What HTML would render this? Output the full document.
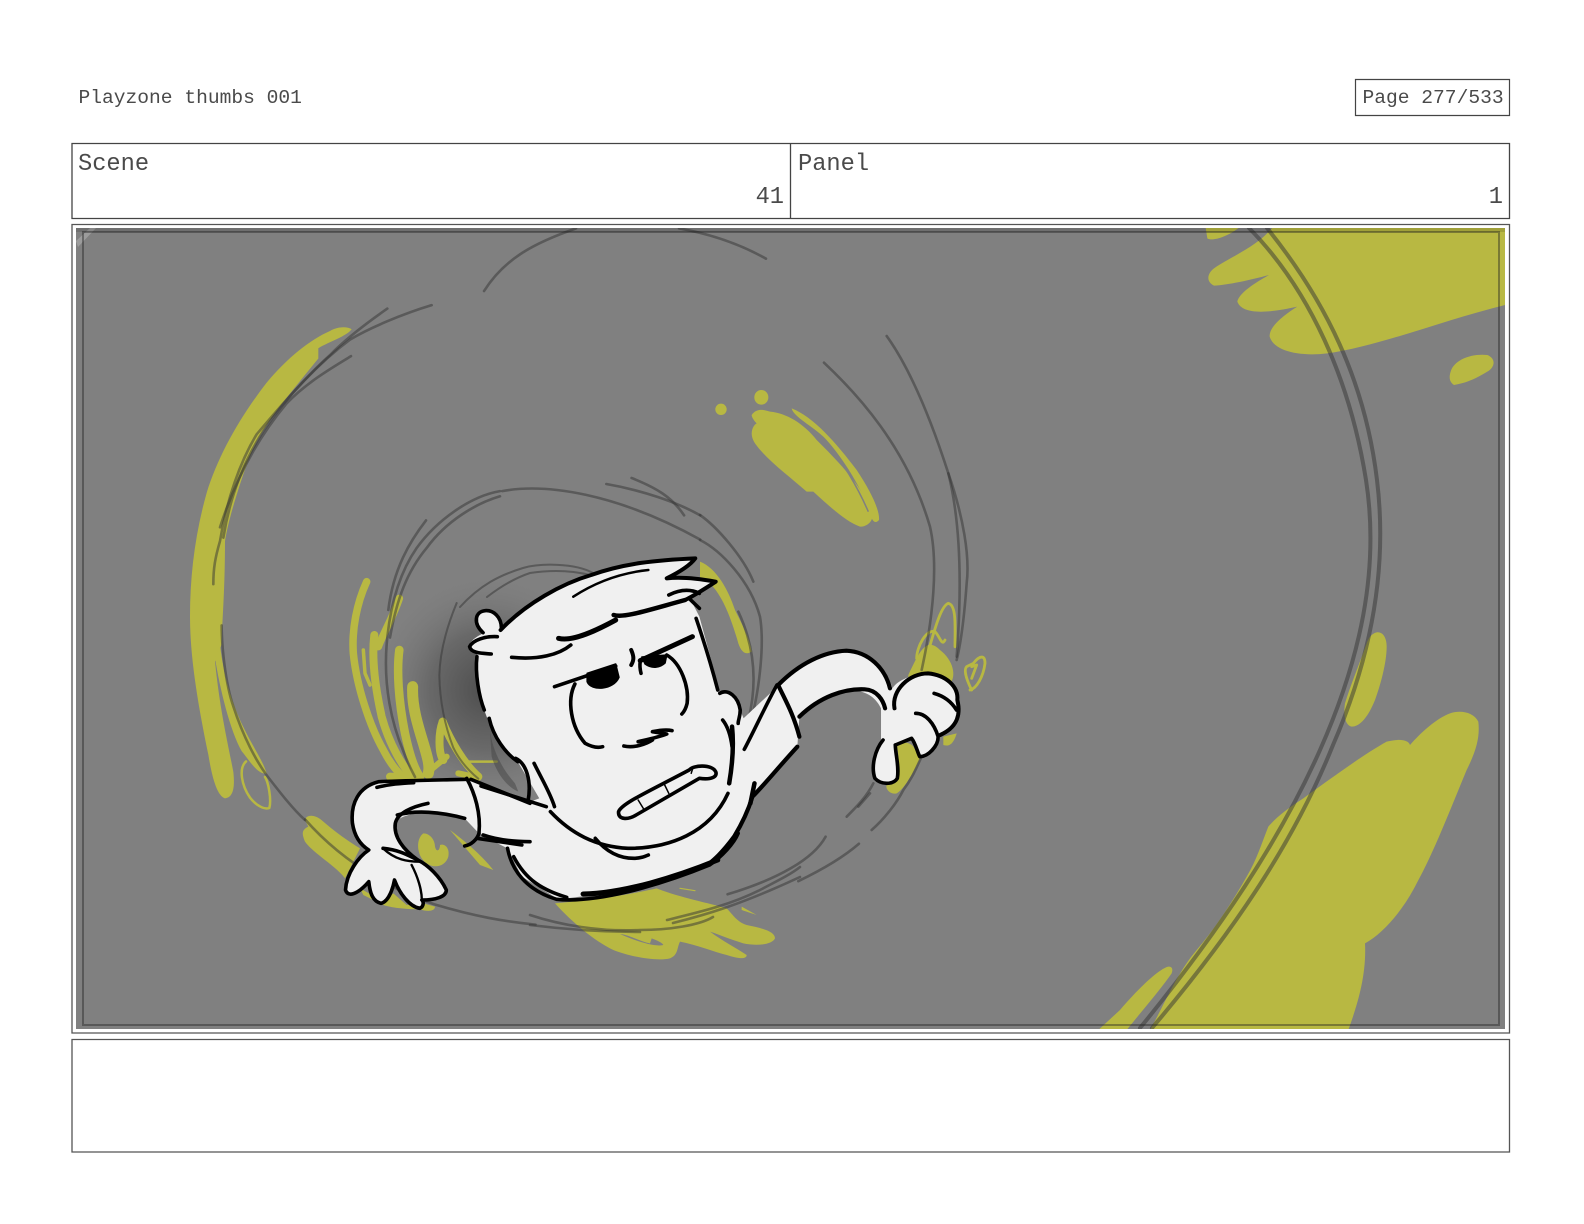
<!DOCTYPE html>
<html><head><meta charset="utf-8"><title>Playzone thumbs 001</title>
<style>
html,body{margin:0;padding:0;background:#fff}
svg{display:block}
path,ellipse,rect,circle{vector-effect:non-scaling-stroke}
.y{fill:#b8b842;stroke:none}
.ys{fill:none;stroke:#b8b842;stroke-linecap:round;stroke-linejoin:round}
.g{fill:none;stroke:#333;stroke-opacity:.5;stroke-width:2.6;stroke-linecap:round;stroke-linejoin:round}
.f{fill:#f0f0f0;stroke:none}
.k{fill:none;stroke:#000;stroke-width:3.6;stroke-linecap:round;stroke-linejoin:round}
.kf{fill:#000;stroke:#000;stroke-width:1.5;stroke-linejoin:round}
text{font-family:"Liberation Mono",monospace;fill:#4a4a4a}
</style></head><body>
<svg width="1584" height="1224" viewBox="0 0 1584 1224" xmlns="http://www.w3.org/2000/svg">
<rect width="1584" height="1224" fill="#fff"/>
<defs>
<radialGradient id="sh" gradientUnits="userSpaceOnUse" cx="488" cy="690" r="118">
<stop offset="0" stop-color="#2a2a2a" stop-opacity=".6"/><stop offset=".5" stop-color="#333" stop-opacity=".3"/><stop offset="1" stop-color="#808080" stop-opacity="0"/>
</radialGradient>
<clipPath id="im"><rect x="76" y="228" width="1429" height="801"/></clipPath>
</defs>

<text x="78.500" y="103" font-size="19.6">Playzone thumbs 001</text>
<rect x="1355.500" y="79.500" width="154" height="36" fill="#fff" stroke="#444" stroke-width="1.200"/>
<text x="1362.500" y="103" font-size="19.6">Page 277/533</text>

<rect x="72" y="143.500" width="1437.500" height="75" fill="#fff" stroke="#444" stroke-width="1.300"/>
<path d="M790.500,143.500V218.500" stroke="#444" stroke-width="1.300" fill="none"/>
<text x="78" y="170" font-size="23.7">Scene</text>
<text x="798" y="170" font-size="23.7">Panel</text>
<text x="784" y="203" font-size="23.7" text-anchor="end">41</text>
<text x="1503" y="203" font-size="23.7" text-anchor="end">1</text>

<rect x="72" y="224.500" width="1437.500" height="808.500" fill="#fff" stroke="#555" stroke-width="1.300"/>
<rect x="72" y="1039.500" width="1437.500" height="112.500" fill="#fff" stroke="#555" stroke-width="1.300"/>

<g clip-path="url(#im)">
<rect x="76" y="228" width="1429" height="801" fill="#808080"/>
<path d="M78,247L96,228H90L76,241Z" fill="#9c9c9c"/>
<circle cx="488" cy="690" r="118" fill="url(#sh)"/>

<!-- top right yellow -->
<g transform="translate(1184,60) scale(.33333)">
<path class="y" d="M65,503L70,535C85,545 130,530 165,503Z"/>
<path class="y" d="M265,503C220,560 140,590 90,625C70,640 65,665 90,677C130,675 200,660 255,645C210,670 165,700 160,725C175,765 250,760 340,740C300,765 255,800 257,830C270,875 350,890 430,880C580,860 780,780 963,735V503Z"/>
<path class="y" d="M800,935C810,900 860,880 910,885C935,895 935,920 910,935C870,960 840,970 810,975C795,965 795,950 800,935Z"/>
</g>
<!-- bottom right yellow -->
<g transform="translate(1120,600) scale(.33333)">
<path class="y" d="M770,97C790,95 800,115 800,140C800,190 780,260 765,300C745,350 720,380 695,380C675,375 670,345 675,310C690,260 715,200 740,130C745,115 755,100 770,97Z"/>
<path class="y" d="M685,1290C710,1220 740,1130 735,1030C790,1000 850,930 890,850C940,760 990,630 1040,510C1070,450 1080,410 1075,365C1060,335 1020,330 990,340C950,355 905,395 870,435C865,420 840,415 800,425C720,470 620,545 550,595C510,620 470,650 445,680C425,730 410,780 380,830C340,900 290,980 230,1050C170,1120 130,1220 90,1290Z"/>
<path class="y" d="M145,1100C120,1105 60,1160 0,1230L-65,1290H20C60,1240 120,1170 155,1120C160,1105 155,1100 145,1100Z"/>
</g>
<!-- left yellow -->
<g transform="translate(170,300) scale(.33333,.34439)">
<path class="y" d="M545,85C530,75 500,78 480,90C420,115 350,170 290,240C210,340 145,450 110,560C75,680 60,800 60,920C60,1040 85,1180 115,1320C125,1380 140,1440 165,1447C190,1445 195,1415 190,1370C170,1270 150,1190 135,1050L155,1000C155,950 165,850 165,700C175,640 200,560 240,450C280,360 370,260 445,170L445,140C480,120 530,105 545,85Z"/>
<path class="y" d="M135,1040C150,1130 180,1250 215,1310C240,1340 265,1380 290,1375C280,1340 250,1300 220,1240C185,1170 160,1090 150,1000Z"/>
<path class="ys" stroke-width="2.500" d="M228,1340C205,1360 215,1410 240,1445C260,1470 285,1480 298,1475C305,1450 295,1400 285,1385"/>
</g>
<!-- strands left of head -->
<g transform="translate(340,560) scale(.33333)">
<path class="ys" stroke-width="7.500" d="M80,65C50,130 35,210 40,280C50,380 90,500 130,570C150,610 175,640 195,655"/>
<path class="ys" stroke-width="7.500" d="M178,115C160,170 125,230 115,260"/>
<path class="ys" stroke-width="8" d="M103,225C95,290 105,380 125,470C150,560 190,620 215,650"/>
<path class="ys" stroke-width="8.500" d="M178,270C170,330 175,420 195,520C210,590 225,630 240,650"/>
<path class="ys" stroke-width="11" d="M218,380C215,440 235,500 250,550C265,600 270,620 265,640"/>
<path class="ys" stroke-width="8" d="M308,485C330,540 370,610 415,650"/>
<path class="ys" stroke-width="8" d="M308,485C295,520 295,580 310,600"/>
<path class="ys" stroke-width="6" d="M260,640L320,590"/>
<path class="ys" stroke-width="2.500" d="M385,605L470,605"/>
<path class="ys" stroke-width="3.500" d="M70,270L75,340L90,375"/>
<path class="ys" stroke-width="6" d="M355,640L410,652"/>
<path class="ys" stroke-width="8" d="M150,650L240,655"/>
<path d="M450,510C455,560 480,620 525,670L535,695C500,680 470,640 455,590Z" fill="#444" opacity=".5"/>
</g>
<!-- mid yellow -->
<g transform="translate(700,330) scale(.33333)">
<circle class="y" cx="63" cy="238" r="17"/>
<ellipse class="y" cx="184" cy="202" rx="21" ry="22"/>
<path class="y" d="M155,255C170,232 195,240 210,245C260,250 310,280 350,330C410,390 470,450 510,530C530,560 510,590 480,590C440,575 400,540 340,485L320,485C270,440 200,390 165,340C145,310 160,285 170,280C160,270 155,260 155,255Z"/>
<path class="y" d="M275,235C340,260 410,340 470,420C510,480 540,540 537,570C525,585 515,570 510,550C490,480 420,370 370,320C340,290 280,260 275,235Z"/>
<path d="M385,345C430,400 470,465 505,545" fill="none" stroke="#808080" stroke-width="1.500"/>
<path class="y" d="M0,695C50,715 85,780 105,840C130,890 150,930 155,965C140,975 125,970 115,940C95,870 70,800 30,760L0,745Z"/>
<path class="y" d="M625,1035C660,960 680,920 720,960C760,990 770,1040 750,1060L625,1050Z"/>
<path class="ys" stroke-width="2.800" d="M670,1010C690,960 715,830 745,820C770,825 765,890 765,950"/>
<path class="ys" stroke-width="2.800" d="M650,985C650,950 680,895 705,905C720,920 725,950 735,930"/>
<path class="ys" stroke-width="2.800" d="M815,1080C800,1050 790,1020 800,1010L820,1000C840,975 855,975 855,1000C850,1040 830,1075 810,1080M815,1010L830,1005L815,1045"/>
<path class="y" d="M590,1245C600,1235 630,1235 640,1250L660,1285C640,1330 610,1380 590,1390C570,1395 555,1375 560,1365C600,1340 600,1290 590,1245Z"/>
<path class="y" d="M730,1220L770,1210C760,1245 745,1250 730,1245Z"/>
</g>
<!-- lower left yellow -->
<g transform="translate(280,790) scale(.33333)">
<path class="y" d="M75,90C80,70 110,75 130,95C170,130 215,160 240,175L195,265C170,230 100,190 75,155C65,130 65,120 85,110Z"/>
<path class="y" d="M430,130C450,130 465,150 465,170C470,190 480,180 480,165C495,160 510,175 505,200C495,235 450,240 425,205C410,180 410,145 430,130Z"/>
<path class="y" d="M240,295L310,335L340,310L380,345L430,340L465,350C465,365 440,365 420,358C390,358 340,355 310,345L250,315Z"/>
<path class="y" d="M510,120C550,150 600,190 640,240L600,225Z"/>
</g>
<!-- bottom splat -->
<g transform="translate(530,860) scale(.33333)">
<path class="y" d="M75,130C130,125 250,115 380,85C440,110 540,130 590,145C610,165 620,185 650,195C700,205 735,215 735,235C725,255 680,258 640,250C600,238 570,225 540,215C580,245 620,265 650,285C650,300 620,295 590,285C550,275 500,255 450,245C440,265 445,285 420,295C380,305 300,290 250,270C190,240 130,190 75,130Z"/>
<path d="M270,222C300,225 330,245 360,250L365,235C380,240 400,250 400,255C370,262 310,240 270,222Z" fill="#808080"/>
<path class="y" d="M635,140L680,165C660,158 640,152 635,150Z"/>
<path class="ys" stroke-width="1.200" d="M450,85L495,92"/>
</g>

<!-- gray arcs -->
<g transform="scale(1.0105)">
<path class="g" d="M479,288C500,255 530,240 570,226"/>
<path class="g" d="M672,226C705,232 735,243 758,256"/>
<path class="g" d="M302,811C345,860 400,885 430,895C470,907 500,912 530,915"/>
<path class="g" d="M720,885C770,870 805,850 817,828"/>
<path class="g" d="M790,872C815,860 835,848 850,835"/>
<path class="g" d="M497,486C540,478 610,488 693,534"/>
<path class="g" d="M600,479C635,485 670,497 693,510"/>
<path class="g" d="M625,473C650,483 665,492 677,510"/>
</g>
<!-- orig-coord gray arcs -->
<path class="g" d="M530,915C560,925 600,932 640,930C670,930 700,925 713,917"/>
<path class="g" d="M530,925C570,930 610,932 640,932"/>
<path class="g" d="M667,920C700,912 730,905 760,890C775,882 790,875 800,867"/>
<path class="g" d="M673,923C705,915 740,905 800,877"/>
<path class="g" style="stroke-width:2" d="M460,607C480,585 500,575 523,568C540,563 575,563 593,573"/>
<path class="g" style="stroke-width:2" d="M487,597C500,587 515,578 530,573C550,570 570,570 590,575"/>
<g transform="translate(170,300) scale(.33333,.34439)">
<path class="g" d="M785,15C700,40 600,80 540,115C450,180 350,280 280,380C220,470 180,570 160,690"/>
<path class="g" d="M652,25C600,60 530,110 480,160C410,220 330,310 260,390C210,470 170,580 150,700C135,750 130,780 130,825"/>
<path class="g" d="M543,163C480,200 410,240 350,300C290,370 210,480 150,660"/>
<path class="g" d="M155,945C155,1000 165,1110 190,1180C220,1270 260,1340 290,1380C330,1430 370,1480 405,1510"/>
<path class="g" d="M990,555C900,570 800,640 740,720C690,790 660,880 650,1000C640,1120 665,1230 700,1310C715,1350 730,1375 735,1385"/>
<path class="g" d="M768,640C720,700 670,780 655,900"/>
<path class="g" d="M990,570C920,590 830,640 770,720C710,790 680,870 660,980"/>
<path class="g" style="stroke-width:2" d="M860,880C830,950 810,1020 808,1090C810,1180 830,1250 850,1300C870,1340 900,1370 925,1390"/>
</g>
<g transform="translate(700,330) scale(.33333)">
<path class="g" d="M372,98C470,190 620,350 690,590C715,700 700,860 665,1020"/>
<path class="g" d="M560,18C640,130 700,290 745,430C790,560 810,680 800,760C795,830 785,930 770,990"/>
<path class="g" d="M745,430C775,550 790,720 770,980"/>
<path class="g" d="M0,555C50,590 130,680 160,755"/>
<path class="g" d="M0,630C60,660 150,750 180,860C195,950 175,1100 150,1180"/>
<path class="g" d="M115,845C150,920 180,1030 145,1170"/>
<path class="g" d="M440,1460C470,1430 500,1400 520,1360"/>
<path class="g" d="M475,1430L510,1390"/>
<path class="g" d="M515,1500C550,1470 590,1420 610,1380C640,1340 650,1310 665,1280"/>
</g>
<!-- big double arc -->
<path class="g" style="stroke-width:4" d="M1249,228C1310,290 1350,380 1366,480C1380,570 1360,660 1320,750C1280,840 1220,930 1140,1028"/>
<path class="g" style="stroke-width:4" d="M1267,228C1325,300 1365,380 1377,480C1388,570 1370,660 1333,745C1295,840 1235,930 1152,1028"/>
<!-- frame -->
<rect x="83" y="232" width="1416" height="793" fill="none" stroke="#222" stroke-opacity=".42" stroke-width="2"/>
<rect x="76" y="228" width="1429" height="4" fill="#000" opacity=".13"/>

<!-- character -->
<g transform="translate(330,540) scale(.40816,.33333)">
<path class="f" d="M350,720L480,790L1000,550L1100,435L1150,530L1145,620L1035,760L1000,880L930,975L740,1050L560,1078L470,1010L435,925L370,885Z"/>
<path class="f" d="M1095,435C1150,370 1210,335 1270,335C1330,340 1365,390 1378,445C1390,420 1430,400 1470,400C1510,405 1540,440 1537,480C1545,520 1540,560 1495,590C1480,610 1470,640 1445,650L1425,595L1385,615C1385,640 1395,680 1390,715C1375,735 1345,735 1335,715C1325,680 1335,630 1350,600V505C1340,480 1320,450 1270,450C1220,455 1180,490 1150,530Z"/>
<path class="f" d="M335,718C270,720 180,722 120,725C70,740 50,790 55,850C60,890 75,915 95,930C70,950 40,1000 38,1050C45,1075 70,1060 95,1025C98,1060 105,1085 125,1090C145,1085 155,1040 158,1020C170,1060 195,1100 220,1105C230,1100 230,1085 225,1080C260,1080 285,1070 285,1050C270,1010 240,975 215,960C180,930 155,890 160,850C165,825 240,800 330,835L365,880L400,800L370,730Z"/>
<path class="f" d="M418,270C420,230 400,210 380,212C355,215 350,250 375,280C350,295 340,310 342,320C345,335 365,340 362,350C355,400 365,470 378,510C400,590 430,640 460,665L520,790L540,815C590,880 650,920 730,925C830,925 930,880 975,760L1020,555L1005,510C1000,470 975,445 955,455L905,230L880,170L945,125L830,110L895,55C800,60 720,70 640,105C570,130 480,190 418,270Z"/>

<path class="k" d="M335,718C270,720 180,722 120,725C70,740 50,790 55,850C60,890 75,915 95,930C70,950 40,1000 38,1050C45,1075 70,1060 95,1025C98,1060 105,1085 125,1090C145,1085 155,1040 158,1020C170,1060 195,1100 220,1105C230,1100 230,1085 225,1080C260,1080 285,1070 285,1050C270,1010 240,975 215,960C190,945 170,930 130,925"/>
<path class="k" d="M215,960C180,930 155,890 160,850C165,820 200,800 240,790"/>
<path class="k" d="M165,825C210,810 270,815 330,835"/>
<path class="k" d="M115,742C150,732 170,730 205,728"/>
<path class="k" d="M335,715C355,760 370,820 365,880C360,900 345,915 330,918"/>
<path class="k" style="stroke-width:2.400" d="M130,925C160,960 190,965 220,965M200,975C215,1010 225,1050 225,1080"/>
<path class="k" d="M345,718L490,790"/>
<path class="k" d="M370,738L530,800"/>
<path class="k" d="M375,885C410,900 450,905 490,905"/>
<path class="k" d="M360,895L470,915"/>
<path class="k" d="M435,925C445,990 480,1050 555,1078C650,1090 800,1040 930,975C960,950 990,910 1000,880"/>
<path class="k" d="M450,950C480,1020 520,1050 580,1072"/>
<path class="k" style="stroke-width:5" d="M620,1062C720,1060 850,1010 950,960"/>
<path class="k" d="M455,655C480,670 495,720 485,785"/>
<path class="k" d="M500,670C520,720 540,760 550,800"/>
<path class="k" d="M540,815C590,880 650,920 730,925C830,925 930,880 975,760"/>
<path class="k" d="M650,895C670,925 700,955 745,955C760,955 770,950 780,945"/>
<path class="k" d="M1015,628C1040,570 1070,490 1095,435"/>
<path class="k" style="stroke-width:4.200" d="M1098,435C1115,480 1135,520 1150,590"/>
<path class="k" style="stroke-width:4.200" d="M1145,620C1100,680 1060,740 1035,770C1025,810 1010,850 990,890C960,940 940,960 925,975"/>
<path class="k" style="stroke-width:4.500" d="M1040,730L1030,790"/>
<path class="k" style="stroke-width:4.500" d="M985,560C990,620 985,680 978,730"/>
<path class="k" d="M962,540C975,560 982,590 985,620"/>
<path class="k" style="stroke-width:4.200" d="M1098,435C1150,370 1210,335 1265,332C1320,335 1360,385 1372,445"/>
<path class="k" style="stroke-width:4.200" d="M1150,530C1200,470 1260,445 1310,448C1340,450 1355,480 1360,505"/>
<path class="k" style="stroke-width:4" d="M1383,505C1375,450 1420,400 1465,400C1510,405 1540,440 1537,480C1545,520 1540,560 1495,585"/>
<path class="k" d="M1480,460C1510,470 1525,490 1535,510"/>
<path class="k" d="M1435,520C1460,520 1480,550 1490,590C1490,620 1465,650 1445,650C1440,640 1435,610 1425,595L1385,615"/>
<path class="k" d="M1355,600C1335,630 1325,680 1335,715C1350,735 1380,735 1390,715C1395,680 1385,640 1385,615"/>
<path class="k" style="stroke-width:4" d="M418,270C480,190 570,130 640,105C720,70 800,60 895,55C880,80 850,100 825,115C860,110 900,115 945,125C920,145 895,165 870,180"/>
<path class="k" d="M830,165C855,150 880,145 905,160"/>
<path class="k" style="stroke-width:2.500" d="M596,170C640,135 700,100 780,90"/>
<path class="k" d="M445,352C510,360 560,345 590,315"/>
<path class="k" style="stroke-width:5" d="M560,295C590,305 640,280 700,240"/>
<path class="k" style="stroke-width:4.500" d="M695,225C720,235 780,210 870,180"/>
<path class="k" d="M420,265C420,230 400,210 380,212C355,215 350,250 375,278"/>
<path class="k" d="M410,290C380,288 350,300 342,320C345,340 375,340 395,342"/>
<path class="k" d="M360,350C355,400 365,470 378,510"/>
<path class="k" d="M390,535C400,590 430,640 460,665"/>
<path class="k" d="M897,235C915,300 935,380 950,450"/>
<path class="k" d="M882,178L905,205"/>
<path class="k" d="M955,460C975,445 1000,470 1005,510C1005,530 1000,540 1000,550"/>
<path class="k" style="stroke-width:5" d="M760,362L888,290"/>
<path class="k" style="stroke-width:4" d="M738,330C745,350 745,360 738,375"/>
<path class="kf" d="M764,351L825,345L821,369C810,382 790,388 772,372Z"/>
<path class="k" d="M550,440L700,378"/>
<path class="kf" d="M630,400L700,372L708,412C695,450 640,455 630,425Z"/>
<path class="k" d="M600,432C580,480 590,560 625,610C640,620 655,625 668,620"/>
<path class="k" d="M825,345C860,370 880,440 875,490C872,505 868,515 862,522"/>
<path class="k" d="M760,365C758,380 760,390 762,400"/>
<path class="k" d="M720,618C745,625 775,612 790,600L755,605C780,598 810,590 825,582L790,575C810,570 825,568 838,572"/>
<path class="k" d="M880,690C890,675 935,672 945,695C950,710 935,720 905,715L750,825C730,840 705,840 707,815C715,790 780,755 880,690Z"/>
<path class="k" style="stroke-width:1.500" d="M820,735L830,760M755,780L770,810M890,680L885,700"/>
</g>
</g>
</svg>
</body></html>
